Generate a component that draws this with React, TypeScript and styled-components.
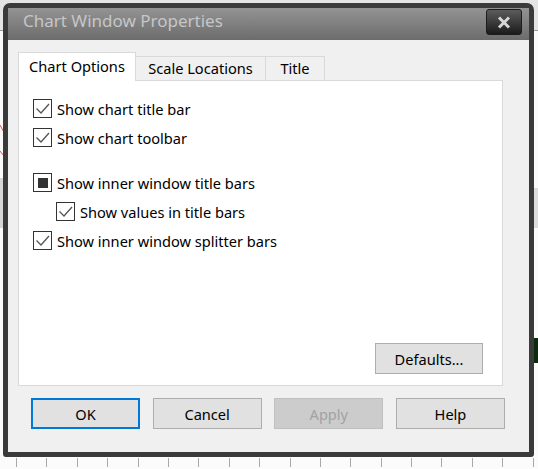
import React from 'react';
import styled, { createGlobalStyle } from 'styled-components';

const GlobalStyle = createGlobalStyle`
  html, body {
    margin: 0;
    padding: 0;
  }
  body {
    width: 538px;
    height: 469px;
    overflow: hidden;
    font-family: "Noto Sans", "Open Sans", sans-serif;
  }
`;

const Desktop = styled.div`
  position: relative;
  width: 538px;
  height: 469px;
  background: #fbfbfb;
  overflow: hidden;
`;

const ToolStrip = styled.div`
  height: 30px;
  background: #e4e4e4;
  border-bottom: 1px solid #9c9c9c;
`;

// bits of the chart behind the dialog that peek out at the edges
const SideLabel = styled.div<{ $top: number; $left: number; $h: number; $bg: string }>`
  position: absolute;
  top: ${p => p.$top}px;
  left: ${p => p.$left}px;
  width: 6px;
  height: ${p => p.$h}px;
  background: ${p => p.$bg};
`;

const TickRow = styled.div`
  position: absolute;
  left: 16px;
  right: 0;
  bottom: 2px;
  height: 9px;
  display: flex;
  gap: 29.4px;
`;

const Tick = styled.div`
  width: 1px;
  height: 9px;
  background: #a8a8a8;
`;

const Dialog = styled.div`
  position: absolute;
  left: 3px;
  top: 3px;
  width: 531px;
  height: 454px;
  box-sizing: border-box;
  border: 5px solid #3a3a3a;
  border-radius: 7px 7px 3px 3px;
  background: #f0f0f0;
  display: flex;
  flex-direction: column;
`;

const TitleBar = styled.div`
  height: 32px;
  flex: none;
  display: flex;
  align-items: flex-start;
  padding: 1px 7px 0 15px;
  box-sizing: border-box;
  background: linear-gradient(#939393, #6c6c6c);
`;

const Title = styled.div`
  margin-top: 1px;
  font-size: 17px;
  line-height: 22px;
  color: #c6c6c8;
`;

const CloseButton = styled.div`
  margin-left: auto;
  width: 36px;
  height: 26px;
  box-sizing: border-box;
  border: 1px solid #1c1c1c;
  border-radius: 3px;
  background: linear-gradient(#5c5c5c, #1b1b1b);
  display: flex;
  align-items: center;
  justify-content: center;
`;

const Body = styled.div`
  flex: 1;
  display: flex;
  flex-direction: column;
  padding: 12px 26px 23px 10px;
  min-height: 0;
`;

const TabStrip = styled.div`
  display: flex;
  align-items: flex-end;
  height: 28px;
  position: relative;
  z-index: 1;
`;

const Tab = styled.div<{ $active?: boolean; $w: number }>`
  width: ${p => p.$w}px;
  height: ${p => (p.$active ? 29 : 24)}px;
  margin-bottom: ${p => (p.$active ? -1 : 0)}px;
  margin-left: -1px;
  box-sizing: border-box;
  border: 1px solid #d9d9d9;
  border-bottom: none;
  background: ${p => (p.$active ? '#ffffff' : '#f0f0f0')};
  font-size: 14.6px;
  line-height: ${p => (p.$active ? 27 : 22)}px;
  text-align: center;
  color: #000;
  &:first-child {
    margin-left: 0;
  }
`;

const Panel = styled.div`
  flex: 1;
  box-sizing: border-box;
  border: 1px solid #d9d9d9;
  background: #ffffff;
  display: flex;
  flex-direction: column;
  padding: 13px 19px 11px 14px;
`;

const Group = styled.div<{ $gap?: number }>`
  display: flex;
  flex-direction: column;
  margin-top: ${p => p.$gap || 0}px;
`;

const Row = styled.label<{ $indent?: boolean }>`
  display: flex;
  align-items: center;
  height: 29px;
  padding-left: ${p => (p.$indent ? 23 : 0)}px;
  font-size: 14.6px;
  color: #000;
`;

const Box = styled.span`
  width: 19px;
  height: 19px;
  flex: none;
  box-sizing: border-box;
  border: 1px solid #333333;
  background: #fff;
  display: flex;
  align-items: center;
  justify-content: center;
  margin-right: 5px;
`;

const Fill = styled.span`
  width: 10px;
  height: 10px;
  background: #333333;
`;

const Button = styled.div<{ $primary?: boolean; $disabled?: boolean }>`
  width: 109px;
  height: 31px;
  box-sizing: border-box;
  border: ${p => (p.$primary ? '2px solid #0078d7' : p.$disabled ? '1px solid #bfbfbf' : '1px solid #adadad')};
  background: ${p => (p.$disabled ? '#cccccc' : '#e1e1e1')};
  color: ${p => (p.$disabled ? '#a2a2a2' : '#000')};
  font-size: 14.6px;
  display: flex;
  align-items: center;
  justify-content: center;
`;

const DefaultsButton = styled(Button)`
  width: 108px;
  margin-top: auto;
  margin-left: auto;
`;

const ButtonRow = styled.div`
  display: flex;
  justify-content: space-between;
  margin: 12px -2px 0 13px;
`;

function Check() {
  return (
    <svg width="17" height="17" viewBox="0 0 17 17">
      <path d="M2.5 8.5 L7 13 L15 4" fill="none" stroke="#555555" strokeWidth="1.3" />
    </svg>
  );
}

interface OptionProps {
  label: string;
  state: 'checked' | 'mixed';
  indent?: boolean;
}

function Option(props: OptionProps) {
  return (
    <Row $indent={props.indent}>
      <Box>{props.state === 'checked' ? <Check /> : <Fill />}</Box>
      {props.label}
    </Row>
  );
}

export default function App() {
  const ticks = Array.from({ length: 18 }, (_, i) => i);
  return (
    <Desktop>
      <GlobalStyle />
      <ToolStrip />
      <svg width="6" height="60" style={{ position: 'absolute', left: 0, top: 115 }}>
        <path d="M0 10 Q4 16 6 24" fill="none" stroke="#e24848" strokeWidth="1" />
        <path d="M0 36 Q4 40 6 46" fill="none" stroke="#e24848" strokeWidth="1" />
      </svg>
      <SideLabel $top={178} $left={0} $h={50} $bg="#d6d6d6" />
      <SideLabel $top={188} $left={533} $h={40} $bg="#dcdcdc" />
      <SideLabel $top={338} $left={533} $h={25} $bg="#0c2a0c" />
      <TickRow>
        {ticks.map(i => (
          <Tick key={i} />
        ))}
      </TickRow>
      <Dialog>
        <TitleBar>
          <Title>Chart Window Properties</Title>
          <CloseButton>
            <svg width="14" height="13" viewBox="0 0 14 13">
              <path d="M2 1.5 L12 11.5 M12 1.5 L2 11.5" stroke="#d6d6d6" strokeWidth="3" />
            </svg>
          </CloseButton>
        </TitleBar>
        <Body>
          <TabStrip>
            <Tab $active $w={118}>Chart Options</Tab>
            <Tab $w={131}>Scale Locations</Tab>
            <Tab $w={60}>Title</Tab>
          </TabStrip>
          <Panel>
            <Group>
              <Option label="Show chart title bar" state="checked" />
              <Option label="Show chart toolbar" state="checked" />
            </Group>
            <Group $gap={16}>
              <Option label="Show inner window title bars" state="mixed" />
              <Option label="Show values in title bars" state="checked" indent />
              <Option label="Show inner window splitter bars" state="checked" />
            </Group>
            <DefaultsButton>Defaults...</DefaultsButton>
          </Panel>
          <ButtonRow>
            <Button $primary>OK</Button>
            <Button>Cancel</Button>
            <Button $disabled>Apply</Button>
            <Button>Help</Button>
          </ButtonRow>
        </Body>
      </Dialog>
    </Desktop>
  );
}
